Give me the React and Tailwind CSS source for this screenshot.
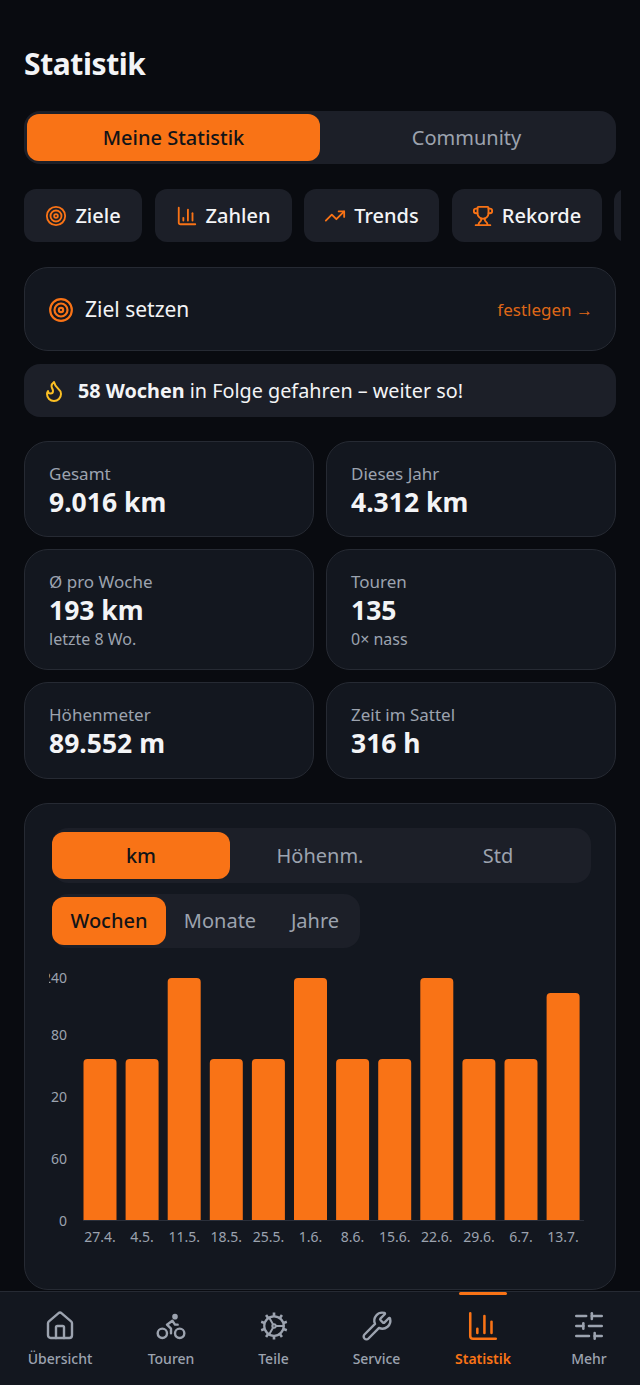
import { Target, ChartColumn, TrendingUp, Trophy, Flame, House, Wrench, SlidersHorizontal } from "lucide-react";

const tabs = [
  { icon: Target, label: "Ziele", w: "w-[118px]" },
  { icon: ChartColumn, label: "Zahlen", w: "w-[137px]" },
  { icon: TrendingUp, label: "Trends", w: "w-[135px]" },
  { icon: Trophy, label: "Rekorde", w: "w-[150px]" },
];

const stats = [
  { label: "Gesamt", value: "9.016 km" },
  { label: "Dieses Jahr", value: "4.312 km" },
  { label: "Ø pro Woche", value: "193 km", sub: "letzte 8 Wo." },
  { label: "Touren", value: "135", sub: "0× nass" },
  { label: "Höhenmeter", value: "89.552 m" },
  { label: "Zeit im Sattel", value: "316 h" },
];

const bars = [
  ["27.4.", 161], ["4.5.", 161], ["11.5.", 242], ["18.5.", 161], ["25.5.", 161], ["1.6.", 242],
  ["8.6.", 161], ["15.6.", 161], ["22.6.", 242], ["29.6.", 161], ["6.7.", 161], ["13.7.", 227],
];

const ticks = [["240", 977], ["180", 1034], ["120", 1096], ["60", 1158], ["0", 1220]];

// ten short teeth around the ring of the gear
const teeth = Array.from({ length: 10 }, (_, i) => {
  const a = ((i * 36 + 18) * Math.PI) / 180;
  return `M${12 + 8 * Math.cos(a)} ${12 + 8 * Math.sin(a)}L${12 + 10.8 * Math.cos(a)} ${12 + 10.8 * Math.sin(a)}`;
}).join("");

function BikeIcon(props) {
  return (
    <svg viewBox="0 0 24 24" fill="none" stroke="currentColor" strokeWidth="2" strokeLinecap="round" strokeLinejoin="round" {...props}>
      <circle cx="18.5" cy="17.5" r="3.5" />
      <circle cx="5.5" cy="17.5" r="3.5" />
      <circle cx="15" cy="5" r="1.2" fill="currentColor" />
      <path d="M12 17.5V14l-3-3 4-3 2 3h2" />
    </svg>
  );
}

function GearIcon(props) {
  return (
    <svg viewBox="0 0 24 24" fill="none" stroke="currentColor" strokeWidth="1.9" strokeLinecap="round" strokeLinejoin="round" {...props}>
      <circle cx="12" cy="12" r="7.8" />
      <circle cx="12" cy="12" r="1.4" strokeWidth="1.5" />
      <path d="M13.4 12h6.4M11.3 10.8 8.1 5.2M11.3 13.2l-3.2 5.6" strokeWidth="1.6" />
      <path d={teeth} strokeWidth="2.1" strokeLinecap="butt" />
    </svg>
  );
}

function Chart() {
  return (
    <svg width="543" height="290" viewBox="0 0 543 290" className="mt-3 -ml-[3px] block font-['Noto_Sans',sans-serif]">
      {ticks.map(([t, y]) => (
        <text key={t} x="18" y={y - 960 + 6} textAnchor="end" fontSize="14" fill="#9ca3af">{t}</text>
      ))}
      <line x1="34" x2="535" y1="260.5" y2="260.5" stroke="#2a2f3a" />
      {bars.map(([d, h], i) => {
        const x = 34.5 + i * 42.1;
        return (
          <g key={d}>
            <path d={`M${x} 260v-${h - 4}a4 4 0 0 1 4-4h25a4 4 0 0 1 4 4v${h - 4}z`} fill="#f97316" />
            <text x={x + 16.5} y="282" textAnchor="middle" fontSize="14" fill="#9ca3af">{d}</text>
          </g>
        );
      })}
    </svg>
  );
}

export default function App() {
  return (
    <div className="relative flex h-[1385px] w-[640px] flex-col overflow-hidden bg-[#090b10] font-['Noto_Sans',sans-serif]">
      <main className="flex-1 overflow-hidden px-6 pt-[44px]">
        <h1 className="h-[40px] text-[30px] leading-[40px] font-bold tracking-[-0.4px] text-[#f3f4f6]">Statistik</h1>

        <div className="mt-[27px] flex h-[53px] rounded-2xl bg-[#1c1f28] p-[3px]">
          <div className="flex w-[293px] items-center justify-center rounded-xl bg-[#f97316] text-xl font-medium text-[#111318]">Meine Statistik</div>
          <div className="flex flex-1 items-center justify-center text-xl text-[#9ca3af]">Community</div>
        </div>

        <div className="mt-[25px] flex w-[597px] gap-[12.5px] overflow-hidden">
          {tabs.map(({ icon: Icon, label, w }) => (
            <div key={label} className={`flex h-[53px] shrink-0 items-center justify-center gap-2 rounded-xl bg-[#1c1f28] text-xl font-medium text-[#f3f4f6] ${w}`}>
              <Icon className="h-[22px] w-[22px] text-[#f97316]" strokeWidth={2} />
              {label}
            </div>
          ))}
          <div className="h-[53px] w-[40px] shrink-0 rounded-xl bg-[#1c1f28]" />
        </div>

        <div className="mt-[25px] flex h-[84px] items-center justify-between rounded-3xl border border-[#262a33] bg-[#13171f] pt-[2px] pr-[22px] pl-[23px]">
          <div className="flex items-center gap-[11px] text-[21px] text-[#f3f4f6]">
            <Target className="h-[26px] w-[26px] text-[#f97316]" />
            Ziel setzen
          </div>
          <span className="text-[17px] text-[#f97316]/90">festlegen →</span>
        </div>

        <div className="mt-[13px] flex h-[53px] items-center gap-3 rounded-2xl bg-[#1c1f28] px-[18px] text-[19.8px] text-[#f3f4f6]">
          <Flame className="h-6 w-6 text-[#fbbf24]" />
          <p><span className="font-bold">58 Wochen</span> in Folge gefahren – weiter so!</p>
        </div>

        <div className="mt-6 grid grid-cols-2 grid-rows-[96px_121px_97px] gap-3">
          {stats.map((s) => (
            <div key={s.label} className="rounded-3xl border border-[#262a33] bg-[#13171f] px-6 pt-[19.5px]">
              <div className="text-[17px] leading-[24px] text-[#9ca3af]">{s.label}</div>
              <div className="text-[26.5px] leading-[32px] font-bold text-[#f3f4f6]">{s.value}</div>
              {s.sub && <div className="text-[16px] leading-[26px] text-[#9ca3af]">{s.sub}</div>}
            </div>
          ))}
        </div>

        <div className="mt-6 h-[487px] rounded-3xl border border-[#262a33] bg-[#13171f] pt-6 pr-6 pl-[27px]">
          <div className="flex h-[55px] rounded-2xl bg-[#1c1f28] py-1">
            <div className="flex w-[178px] items-center justify-center rounded-xl bg-[#f97316] text-xl font-medium text-[#111318]">km</div>
            <div className="flex w-[180px] items-center justify-center text-xl text-[#9ca3af]">Höhenm.</div>
            <div className="flex w-[176px] items-center justify-center text-xl text-[#9ca3af]">Std</div>
          </div>
          <div className="mt-[11px] flex h-[54px] w-[308px] rounded-2xl bg-[#1c1f28] py-[3px]">
            <div className="flex w-[114px] items-center justify-center rounded-xl bg-[#f97316] text-xl font-medium text-[#111318]">Wochen</div>
            <div className="flex w-[108px] items-center justify-center text-xl text-[#9ca3af]">Monate</div>
            <div className="flex w-[82px] items-center justify-center text-xl text-[#9ca3af]">Jahre</div>
          </div>
          <Chart />
        </div>
      </main>

      <nav className="flex h-[94px] shrink-0 border-t border-[#262a33] bg-[#13171f]">
        {[
          { icon: House, label: "Übersicht", w: "w-[120px]", size: "h-8 w-8" },
          { icon: BikeIcon, label: "Touren", w: "w-[102px]", size: "h-8 w-8" },
          { icon: GearIcon, label: "Teile", w: "w-[103px]", size: "h-[30px] w-[30px]" },
          { icon: Wrench, label: "Service", w: "w-[103px]", size: "h-8 w-8" },
          { icon: ChartColumn, label: "Statistik", w: "w-[110px]", size: "h-[34px] w-[34px]", active: true },
          { icon: SlidersHorizontal, label: "Mehr", w: "w-[102px]", size: "h-[34px] w-[34px]" },
        ].map(({ icon: Icon, label, w, size, active }) => (
          <div key={label} className={`relative flex flex-col items-center pt-[17px] ${w} ${active ? "text-[#f97316]" : "text-[#9ca3af]"}`}>
            {active && <span className="absolute top-0 h-[3px] w-[48px] rounded-full bg-[#f97316]" />}
            <div className="flex h-[34px] items-center justify-center">
              <Icon className={size} strokeWidth={1.8} />
            </div>
            <span className={`mt-[6px] text-sm leading-5 ${active ? "font-semibold" : "font-medium"}`}>{label}</span>
          </div>
        ))}
      </nav>
    </div>
  );
}
